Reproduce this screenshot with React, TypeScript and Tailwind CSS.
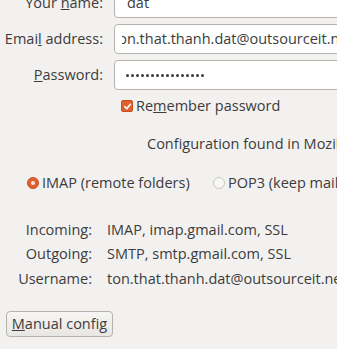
import React from "react";

const Radio: React.FC<{ checked?: boolean }> = ({ checked }) =>
  checked ? (
    <span className="w-[12px] h-[12px] rounded-full bg-[#e0612f] border border-[#c4501f] flex items-center justify-center shrink-0">
      <span className="w-[4px] h-[4px] rounded-full bg-[#fbe3d8]" />
    </span>
  ) : (
    <span className="w-[12px] h-[12px] rounded-full bg-[#f7f7f6] border border-[#c9c6c2] shrink-0" />
  );

const App: React.FC = () => {
  const dots = Array.from({ length: 16 });

  return (
    <div
      className="w-[337px] h-[349px] overflow-hidden bg-[#f2f1f0] text-[#3c3c3c] text-[14.5px] leading-none whitespace-nowrap"
      style={{ fontFamily: '"Open Sans", "DejaVu Sans", sans-serif' }}
    >
      {/* Account fields */}
      <div className="-mt-[12px] flex flex-col gap-[6px]">
        <div className="flex items-center">
          <div className="w-[103px] shrink-0 text-right">
            Your <span className="underline">n</span>ame:
          </div>
          <div className="ml-[11px] w-[260px] shrink-0 h-[30px] bg-white border border-[#b6b2ac] rounded-[4px] flex items-center pl-[12px]">
            dat
          </div>
        </div>
        <div className="flex items-center">
          <div className="w-[103px] shrink-0 text-right">
            Emai<span className="underline">l</span> address:
          </div>
          <div className="ml-[11px] w-[260px] shrink-0 h-[30px] bg-white border border-[#b6b2ac] rounded-[4px] flex items-center pl-[7px]">
            <div className="overflow-hidden">
              <span className="block -ml-[9px]">ton.that.thanh.dat@outsourceit.net</span>
            </div>
          </div>
        </div>
        <div className="flex items-center">
          <div className="w-[103px] shrink-0 text-right">
            <span className="underline">P</span>assword:
          </div>
          <div className="ml-[11px] w-[260px] shrink-0 h-[30px] bg-white border border-[#b6b2ac] rounded-[4px] flex items-center gap-[2px] pl-[11px]">
            {dots.map((_, i) => (
              <span key={i} className="w-[3px] h-[3px] rounded-full bg-[#3c3c3c]" />
            ))}
          </div>
        </div>
      </div>

      {/* Remember */}
      <div className="mt-[9px] ml-[121px] flex items-center gap-[3px]">
        <span className="w-[12px] h-[12px] rounded-[2px] bg-[#e0612f] border border-[#c4501f] flex items-center justify-center">
          <svg width="9" height="9" viewBox="0 0 10 10">
            <path d="M2 5.2 L4.2 7.4 L8.2 2.6" stroke="white" strokeWidth="1.8" fill="none" strokeLinecap="round" strokeLinejoin="round" />
          </svg>
        </span>
        <span>
          Re<span className="underline">m</span>ember password
        </span>
      </div>

      <div className="mt-[23px] ml-[147px]">Configuration found in Mozilla ISP database</div>

      {/* Protocol */}
      <div className="mt-[25px] flex items-center">
        <div className="ml-[27px] w-[186px] shrink-0 flex items-center gap-[3px]">
          <Radio checked />
          <span>IMAP (remote folders)</span>
        </div>
        <div className="flex items-center gap-[3px]">
          <Radio />
          <span>POP3 (keep mail on computer)</span>
        </div>
      </div>

      {/* Summary */}
      <div className="mt-[32px] flex flex-col gap-[10px]">
        <div className="flex">
          <div className="w-[92px] shrink-0 text-right">Incoming:</div>
          <div className="ml-[15px]">IMAP, imap.gmail.com, SSL</div>
        </div>
        <div className="flex">
          <div className="w-[92px] shrink-0 text-right">Outgoing:</div>
          <div className="ml-[15px]">SMTP, smtp.gmail.com, SSL</div>
        </div>
        <div className="flex">
          <div className="w-[92px] shrink-0 text-right">Username:</div>
          <div className="ml-[15px]">ton.that.thanh.dat@outsourceit.net</div>
        </div>
      </div>

      <button className="mt-[25px] ml-[6px] w-[107px] h-[26px] rounded-[4px] border border-[#b6b2ac] bg-gradient-to-b from-[#f7f6f5] to-[#e8e6e3] text-[#3c3c3c] flex items-center justify-center">
        <span>
          <span className="underline">M</span>anual config
        </span>
      </button>
    </div>
  );
};

export default App;
